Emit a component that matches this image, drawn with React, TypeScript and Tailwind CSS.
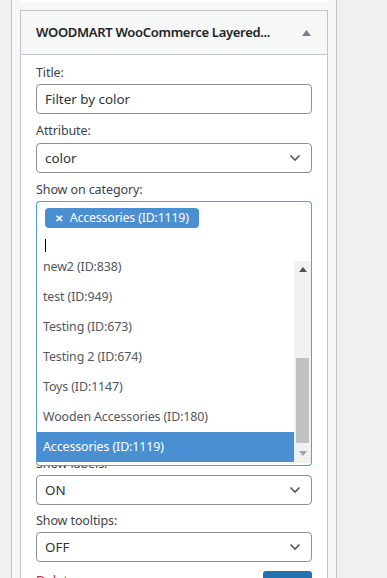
import type { ReactNode } from 'react';

const font = { fontFamily: '"Noto Sans", "Open Sans", "Liberation Sans", sans-serif' };

const options = [
  'new2 (ID:838)',
  'test (ID:949)',
  'Testing (ID:673)',
  'Testing 2 (ID:674)',
  'Toys (ID:1147)',
  'Wooden Accessories (ID:180)',
  'Accessories (ID:1119)',
];

function Chevron() {
  return (
    <svg width="12" height="8" viewBox="0 0 12 8" className="shrink-0">
      <path d="M1.5 1.5 L6 6 L10.5 1.5" fill="none" stroke="#50575e" strokeWidth="1.6" />
    </svg>
  );
}

function Label({ children }: { children: ReactNode }) {
  return <div className="h-5 text-[12.5px] leading-5 tracking-[-0.1px] text-[#3c434a]">{children}</div>;
}

function Select({ value }: { value: string }) {
  return (
    <div className="mt-px flex h-[30px] items-center justify-between rounded border border-[#8c8f94] bg-white pl-2 pr-2.5 text-[13.4px] text-[#2c3338]">
      <span>{value}</span>
      <Chevron />
    </div>
  );
}

function CategoryDropdown() {
  return (
    <div className="relative">
      <div className="flex h-[60px] flex-col items-start rounded-t border border-b-0 border-[#5b9dd9] bg-white px-2 pt-[6px]">
        <span className="flex h-5 items-center gap-[7px] rounded bg-[#4a8fd1] px-2.5 text-[12.3px] tracking-[-0.15px] text-white">
          <span className="text-[10px] font-bold">✕</span>
          Accessories (ID:1119)
        </span>
        <div className="mt-[11px] h-[13px] w-px bg-black" />
      </div>
      <div className="absolute left-0 right-0 top-[60px] z-10 rounded-b border border-t-0 border-[#5b9dd9] bg-white pb-[2px]">
        <div className="flex h-[202px] overflow-hidden">
          <div className="-mt-[9px] flex-1">
            {options.map((o, i) => (
              <div
                key={o}
                className={`h-[30px] pl-[6px] text-[12.4px] leading-[30px] tracking-[-0.1px] ${
                  i === options.length - 1 ? 'bg-[#4a8fd1] text-white' : 'text-[#50575e]'
                }`}
              >
                {o}
              </div>
            ))}
          </div>
          <div className="flex w-[17px] flex-col items-center bg-[#f1f1f1]">
            <div className="flex h-[17px] items-center justify-center">
              <svg width="8" height="5" viewBox="0 0 8 5">
                <path d="M0 5 L4 0 L8 5 Z" fill="#505050" />
              </svg>
            </div>
            <div className="mt-[80px] h-[85px] w-[13px] bg-[#c1c1c1]" />
            <div className="flex flex-1 items-center justify-center">
              <svg width="8" height="5" viewBox="0 0 8 5">
                <path d="M0 0 L8 0 L4 5 Z" fill="#a3a3a3" />
              </svg>
            </div>
          </div>
        </div>
      </div>
    </div>
  );
}

export default function App() {
  return (
    <div className="flex h-[578px] w-[387px] overflow-hidden bg-[#f0f0f1]" style={font}>
      <div className="ml-[11px] w-[326px] border-x border-[#c3c4c7] bg-[#f6f7f7]">
        <div className="ml-2 h-[2px] w-[308px] bg-white" />
        <div className="ml-2 mt-2 w-[308px] border border-[#c3c4c7] bg-white">
          <div className="flex h-[44px] items-center justify-between border-b border-[#c3c4c7] bg-[#f6f7f7] pl-[15px] pr-[16px]">
            <span className="text-[13px] font-semibold tracking-[-0.3px] text-[#1d2327]">WOODMART WooCommerce Layered...</span>
            <svg width="9" height="6" viewBox="0 0 9 6">
              <path d="M0 6 L4.5 0 L9 6 Z" fill="#787c82" />
            </svg>
          </div>
          <div className="px-[15px] pt-2">
            <Label>Title:</Label>
            <div className="mt-px flex h-[30px] items-center rounded border border-[#8c8f94] bg-white px-2 text-[13.4px] text-[#2c3338]">
              Filter by color
            </div>
            <div className="mt-[7px]">
              <Label>Attribute:</Label>
            </div>
            <div className="mt-[2px]">
              <Select value="color" />
            </div>
            <div className="mt-[7px]">
              <Label>Show on category:</Label>
            </div>
            <div className="mt-px">
              <CategoryDropdown />
            </div>
            <div className="mt-[7px]">
              <Label>Display:</Label>
            </div>
            <div className="mt-px">
              <Select value="List" />
            </div>
            <div className="mt-[7px]">
              <Label>Size:</Label>
            </div>
            <div className="mt-px">
              <Select value="Normal" />
            </div>
            <div className="mt-[7px]">
              <Label>Show more:</Label>
            </div>
            <div className="mt-px">
              <Select value="OFF" />
            </div>
            <div className="mt-[19px]">
              <Label>Show labels:</Label>
            </div>
            <Select value="ON" />
            <div className="mt-[6px]">
              <Label>Show tooltips:</Label>
            </div>
            <div className="mt-[1px]">
              <Select value="OFF" />
            </div>
            <div className="mt-[9px] flex items-start justify-between">
              <span className="-mt-px text-[13px] leading-5 text-[#b32d2e]">Delete</span>
              <button className="h-[30px] w-[49px] rounded-[3px] bg-[#2271b1] text-[13px] text-white">Save</button>
            </div>
          </div>
        </div>
      </div>
    </div>
  );
}
